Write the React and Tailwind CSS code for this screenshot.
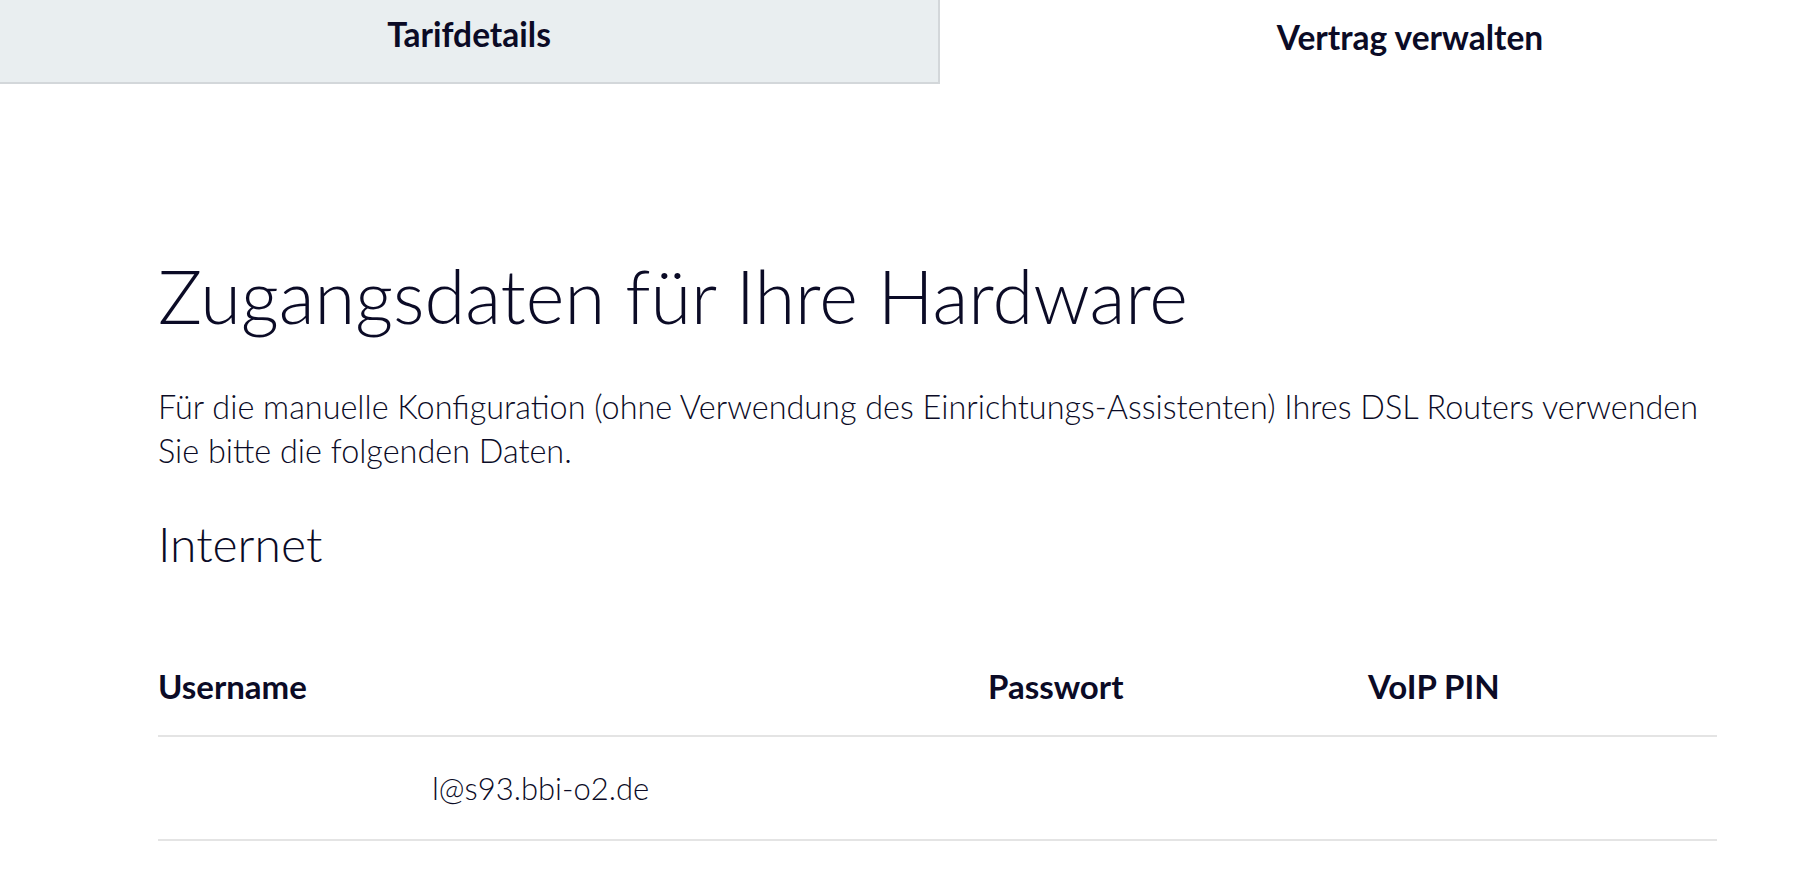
export default function App() {
  return (
    <div className="w-[1808px] h-[888px] overflow-hidden bg-white text-[#0b0b26] font-['Lato',sans-serif]">
      {/* Tabs */}
      <div className="flex h-[84px] w-[1880px]">
        <div className="w-[940px] bg-[#e9eef0] border-r-2 border-b-2 border-[#d3d7da] flex items-center justify-center pb-[14px]">
          <span className="text-[33.5px] font-bold">Tarifdetails</span>
        </div>
        <div className="w-[940px] flex items-center justify-center pb-[10px]">
          <span className="text-[33.5px] font-bold">Vertrag verwalten</span>
        </div>
      </div>

      {/* Content */}
      <div className="pl-[158px] pr-[91px]">
        <h1 className="mt-[175px] text-[74px] font-light leading-none">
          Zugangsdaten für Ihre Hardware
        </h1>
        <p className="mt-[52px] text-[32.4px] font-light leading-[44px]">
          Für die manuelle Konfiguration (ohne Verwendung des Einrichtungs-Assistenten) Ihres DSL Routers verwenden Sie bitte die folgenden Daten.
        </p>
        <h2 className="mt-[47px] text-[48px] font-light leading-none">Internet</h2>

        <div className="mt-[102px]">
          <div className="flex border-b-2 border-[#e4e4e4] pb-[32px] text-[33px] font-bold leading-none">
            <div className="w-[830px]">Username</div>
            <div className="w-[380px]">Passwort</div>
            <div className="flex-1">VoIP PIN</div>
          </div>
          <div className="flex items-center h-[104px] border-b-2 border-[#e4e4e4] text-[31px] font-light">
            <div className="w-[830px] pl-[274px]">l@s93.bbi-o2.de</div>
            <div className="w-[380px]"></div>
            <div className="flex-1"></div>
          </div>
        </div>
      </div>
    </div>
  );
}
